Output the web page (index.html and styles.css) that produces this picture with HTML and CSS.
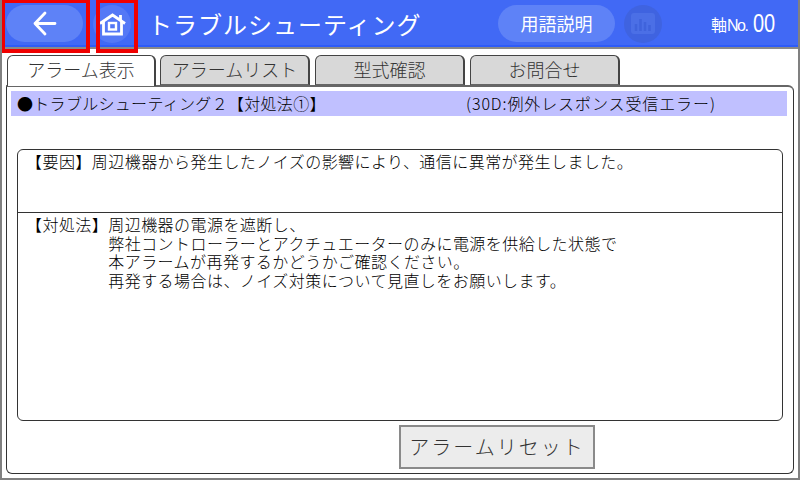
FILE: index.html
```html
<!DOCTYPE html>
<html lang="ja">
<head>
    <meta charset="UTF-8">
    <title>トラブルシューティング</title>
    <link rel="stylesheet" href="styles.css">
</head>
<body>
    <header class="topbar">
        <div class="back-btn">
            <svg width="24" height="25" viewBox="0 0 24 25">
                <path d="M12 2 L2 12.5 L12 23 M2 12.5 L22 12.5" fill="none" stroke="#fff" stroke-width="2.8" stroke-linecap="round" stroke-linejoin="round"/>
            </svg>
        </div>
        <div class="home-btn">
            <svg width="27" height="24" viewBox="0 0 27 24">
                <path d="M1 11.5 L13.5 3 L26 11.5" fill="none" stroke="#fff" stroke-width="2.8"/>
                <path d="M21.5 3 V9" fill="none" stroke="#fff" stroke-width="2.8"/>
                <path d="M4.5 9.5 V22 H22.5 V9.5" fill="none" stroke="#fff" stroke-width="2.8"/>
                <rect x="10" y="11" width="7" height="6.5" fill="none" stroke="#fff" stroke-width="2.4"/>
            </svg>
        </div>
        <div class="title">トラブルシューティング</div>
        <div class="glossary-btn">用語説明</div>
        <div class="chart-btn">
            <svg width="24" height="21" viewBox="0 0 24 21">
                <rect x="0" y="0" width="24" height="21" rx="3" fill="#4b6fe6"/>
                <path d="M5 18 V11 M9.5 18 V6 M14 18 V9 M18.5 18 V12" stroke="#3f63dc" stroke-width="2.5"/>
            </svg>
        </div>
        <div class="axis"><span class="axis-label">軸<span class="axis-no">No.</span></span><span class="axis-num">00</span></div>
    </header>

    <nav class="tabs">
        <div class="tab tab-active">アラーム表示</div>
        <div class="tab tab-list">アラームリスト</div>
        <div class="tab tab-model">型式確認</div>
        <div class="tab tab-contact">お問合せ</div>
    </nav>

    <main class="panel">
        <div class="heading">
            <span class="heading-main">●トラブルシューティング２【対処法①】</span>
            <span class="heading-code">(30D:例外レスポンス受信エラー)</span>
        </div>
        <div class="info-box">
            <div class="cause">
                <span class="label">【要因】</span>
                <span>周辺機器から発生したノイズの影響により、通信に異常が発生しました。</span>
            </div>
            <div class="remedy">
                <span class="label">【対処法】</span>
                <div>
                    周辺機器の電源を遮断し、<br>
                    弊社コントローラーとアクチュエーターのみに電源を供給した状態で<br>
                    本アラームが再発するかどうかご確認ください。<br>
                    再発する場合は、ノイズ対策について見直しをお願いします。
                </div>
            </div>
        </div>
        <div class="actions">
            <div class="reset-btn">アラームリセット</div>
        </div>
    </main>
</body>
</html>
```

FILE: styles.css
```css
* {
    box-sizing: border-box;
}

body {
    margin: 0;
    width: 800px;
    height: 480px;
    overflow: hidden;
    background-color: #ffffff;
    border: 2px solid #808080;
    border-top: none;
    font-family: "Noto Sans CJK JP", "Liberation Sans", sans-serif;
    font-weight: 300;
    color: #000000;
}

.topbar {
    height: 49px;
    background-color: #4169f5;
    border-bottom: 2px solid #8a8a8a;
    box-shadow: inset 0 -2px 0 #2f5cf8;
    display: flex;
    align-items: center;
    position: relative;
}

.back-btn {
    width: 77px;
    height: 37px;
    margin-left: 4px;
    border-radius: 19px;
    background-color: #5e82f7;
    display: flex;
    align-items: center;
    justify-content: center;
}

.home-btn {
    width: 38px;
    height: 38px;
    margin-left: 10px;
    border-radius: 50%;
    background-color: #5478f6;
    display: flex;
    align-items: center;
    justify-content: center;
}

/* red markers drawn on top of the buttons */
.back-btn::after,
.home-btn::after {
    content: "";
    box-sizing: border-box;
    position: absolute;
    top: 0;
    height: 53px;
    border: 4px solid #f00000;
    border-top-width: 3px;
}

.back-btn::after {
    left: -1px;
    width: 89px;
}

.home-btn::after {
    left: 94px;
    width: 42px;
}

.title {
    width: 270px;
    margin-left: 17px;
    font-size: 24px;
    letter-spacing: 1px;
    color: #ffffff;
    white-space: nowrap;
    font-weight: 400;
}

.glossary-btn {
    width: 117px;
    height: 37px;
    margin-left: 80px;
    border-radius: 19px;
    background-color: #5e82f7;
    color: #ffffff;
    font-size: 18px;
    font-weight: 400;
    line-height: 37px;
    text-align: center;
}

.chart-btn {
    width: 38px;
    height: 38px;
    margin-left: 9px;
    border-radius: 50%;
    background-color: #3f63e0;
    display: flex;
    align-items: center;
    justify-content: center;
}

.axis {
    margin-left: 49px;
    color: #ffffff;
    display: flex;
    align-items: center;
    font-weight: 400;
}

.axis-label {
    font-size: 16px;
}

.axis-no {
    font-family: "Liberation Sans", sans-serif;
    letter-spacing: -1.5px;
}

.axis-num {
    margin-left: 6px;
    font-family: "Liberation Sans", sans-serif;
    font-size: 25px;
    transform: scaleX(0.8);
    transform-origin: left center;
}

.tabs {
    display: flex;
    padding-left: 5px;
    padding-top: 6px;
    height: 36px;
}

.tab {
    width: 150px;
    height: 30px;
    margin-right: 5px;
    border: 1px solid #444444;
    border-bottom: 1px solid #666666;
    border-right-width: 2px;
    border-radius: 6px 6px 0 0;
    background-color: #d8d8d8;
    color: #333333;
    font-size: 18px;
    line-height: 26px;
    text-align: center;
}

.tab-active {
    width: 149px;
    height: 31px;
    margin-right: 4px;
    background-color: #ffffff;
    border-bottom: none;
    position: relative;
    z-index: 1;
}

.panel {
    width: 788px;
    height: 389px;
    margin-left: 4px;
    border: 1px solid #333333;
    border-top: 2px solid #666666;
    border-radius: 0 6px 6px 6px;
    padding: 4px;
}

.heading {
    width: 776px;
    height: 25px;
    background-color: #c0c0ff;
    font-size: 16px;
    line-height: 25px;
    display: flex;
}

.heading-main {
    width: 455px;
    padding-left: 6px;
    letter-spacing: 0.3px;
    white-space: nowrap;
}

.heading-code {
    white-space: nowrap;
    letter-spacing: 0.9px;
}

.info-box {
    width: 766px;
    height: 272px;
    margin-top: 33px;
    margin-left: 6px;
    border: 1px solid #333333;
    border-radius: 6px;
    font-size: 16px;
    letter-spacing: 0.45px;
    line-height: 18.5px;
}

.cause {
    height: 63px;
    padding-top: 2px;
    border-bottom: 1px solid #333333;
    display: flex;
}

.remedy {
    display: flex;
    padding-top: 2px;
}

.label {
    padding-left: 8px;
    flex: none;
}

.actions {
    padding-left: 388px;
    margin-top: 4px;
}

.reset-btn {
    width: 196px;
    height: 44px;
    border: 2px solid #8a8a8a;
    background-color: #ececec;
    color: #333333;
    font-size: 20px;
    line-height: 40px;
    text-align: center;
    letter-spacing: 2px;
}
```
